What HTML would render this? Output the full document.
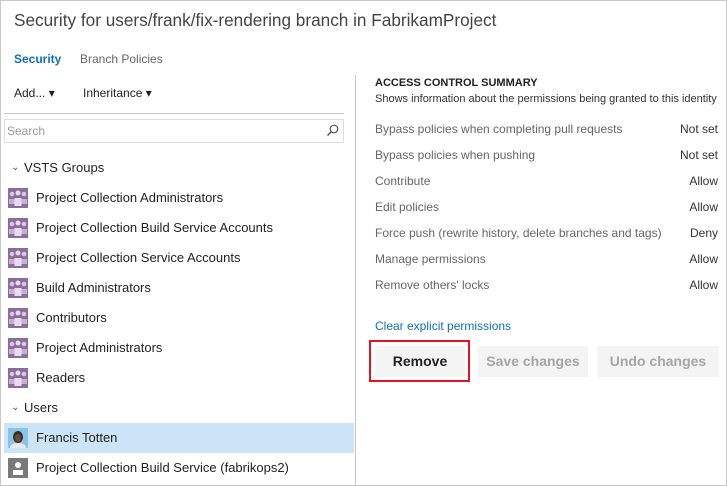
<!DOCTYPE html>
<html><head><style>
body{margin:0;width:727px;height:486px;overflow:hidden;background:#fff;font-family:"Segoe UI","Liberation Sans",sans-serif;position:relative}
.frame{position:absolute;left:0;top:0;width:725px;height:484px;border:1px solid #c8c8c8}
.a{position:absolute;white-space:nowrap}
.row{position:absolute;left:4px;width:350px;height:30px;font-size:13px;color:#222;line-height:30px}
.row span{position:absolute;left:32px}
.ic{position:absolute;left:4px;top:5px;width:20px;height:20px}
.perm{position:absolute;left:375px;width:343px;font-size:12px;color:#666;height:26px;line-height:26px}
.perm b{position:absolute;right:0;font-weight:normal;color:#333}
.btn{position:absolute;top:346px;height:31px;background:#f4f4f4;font-size:14px;font-weight:bold;text-align:center;line-height:31px;color:#a6a6a6}
</style></head><body>
<div class="frame"></div>
<div class="a" style="left:14px;top:10px;font-size:17.2px;color:#444">Security for users/frank/fix-rendering branch in FabrikamProject</div>
<div class="a" style="left:14px;top:52px;font-size:12px;color:#106ebe;font-weight:bold">Security</div>
<div class="a" style="left:80px;top:52px;font-size:12px;color:#666">Branch Policies</div>
<div style="position:absolute;left:355px;top:75px;width:1px;height:411px;background:#c8c8c8"></div>
<div class="a" style="left:14px;top:86px;font-size:12px;color:#222">Add... ▾</div>
<div class="a" style="left:83px;top:86px;font-size:12px;color:#222">Inheritance ▾</div>
<div style="position:absolute;left:4px;top:113px;width:340px;height:1px;background:#c8c8c8"></div>
<div style="position:absolute;left:4px;top:119px;width:338px;height:22px;border:1px solid #ddd"></div>
<div class="a" style="left:7px;top:124px;font-size:12px;color:#999">Search</div>
<svg class="a" style="left:326px;top:124px" width="13" height="13" viewBox="0 0 13 13"><circle cx="8" cy="5" r="3.8" fill="none" stroke="#555" stroke-width="1.2"/><path d="M5.3 7.7L1.5 11.5" stroke="#555" stroke-width="1.5"/></svg>
<div class="row" style="top:153px"><span style="left:7px;font-size:10px;color:#555">⌄</span><span style="left:20px">VSTS Groups</span></div>
<svg width="0" height="0" style="position:absolute"><defs><g id="g"><rect width="20" height="20" fill="#8a6d9b"/><circle cx="4" cy="6" r="2.3" fill="#d9c7e2"/><circle cx="10" cy="5" r="2.5" fill="#e8dcef"/><circle cx="16" cy="6" r="2.3" fill="#d9c7e2"/><path d="M1 16v-5h6v5zM13 16v-5h6v5z" fill="#c7b0d4"/><path d="M6.5 18v-8h7v8z" fill="#e8dcef"/></g></defs></svg>
<div class="row" style="top:183px"><svg class="ic"><use href="#g"/></svg><span>Project Collection Administrators</span></div>
<div class="row" style="top:213px"><svg class="ic"><use href="#g"/></svg><span>Project Collection Build Service Accounts</span></div>
<div class="row" style="top:243px"><svg class="ic"><use href="#g"/></svg><span>Project Collection Service Accounts</span></div>
<div class="row" style="top:273px"><svg class="ic"><use href="#g"/></svg><span>Build Administrators</span></div>
<div class="row" style="top:303px"><svg class="ic"><use href="#g"/></svg><span>Contributors</span></div>
<div class="row" style="top:333px"><svg class="ic"><use href="#g"/></svg><span>Project Administrators</span></div>
<div class="row" style="top:363px"><svg class="ic"><use href="#g"/></svg><span>Readers</span></div>
<div class="row" style="top:393px"><span style="left:7px;font-size:10px;color:#555">⌄</span><span style="left:20px">Users</span></div>
<div class="row" style="top:423px;background:#cce4f6"><svg class="ic" viewBox="0 0 20 20"><rect width="20" height="20" fill="#8bc4ea"/><path d="M2 20q0-5 8-5t8 5z" fill="#e8e8e8"/><ellipse cx="10" cy="9" rx="5" ry="6" fill="#3a2a22"/><ellipse cx="10" cy="10" rx="3" ry="4" fill="#6b4a3a"/></svg><span>Francis Totten</span></div>
<div class="row" style="top:453px"><svg class="ic" viewBox="0 0 20 20"><rect width="20" height="20" fill="#7a7a7a"/><circle cx="10" cy="7" r="3" fill="#fff"/><path d="M5 17v-5h10v5z" fill="#fff"/></svg><span>Project Collection Build Service (fabrikops2)</span></div>
<div class="a" style="left:375px;top:77px;font-size:11px;font-weight:bold;color:#222">ACCESS CONTROL SUMMARY</div>
<div class="a" style="left:375px;top:93px;font-size:11px;color:#333">Shows information about the permissions being granted to this identity</div>
<div class="perm" style="top:116px">Bypass policies when completing pull requests<b>Not set</b></div>
<div class="perm" style="top:142px">Bypass policies when pushing<b>Not set</b></div>
<div class="perm" style="top:168px">Contribute<b>Allow</b></div>
<div class="perm" style="top:194px">Edit policies<b>Allow</b></div>
<div class="perm" style="top:220px">Force push (rewrite history, delete branches and tags)<b>Deny</b></div>
<div class="perm" style="top:246px">Manage permissions<b>Allow</b></div>
<div class="perm" style="top:272px">Remove others' locks<b>Allow</b></div>
<div class="a" style="left:375px;top:319px;font-size:12px;color:#106ebe">Clear explicit permissions</div>
<div class="btn" style="left:375px;width:90px;color:#222">Remove</div>
<div style="position:absolute;left:369px;top:340px;width:97px;height:38px;border:2px solid #e81123"></div>
<div class="btn" style="left:478px;width:110px">Save changes</div>
<div class="btn" style="left:597px;width:122px">Undo changes</div>
</body></html>
